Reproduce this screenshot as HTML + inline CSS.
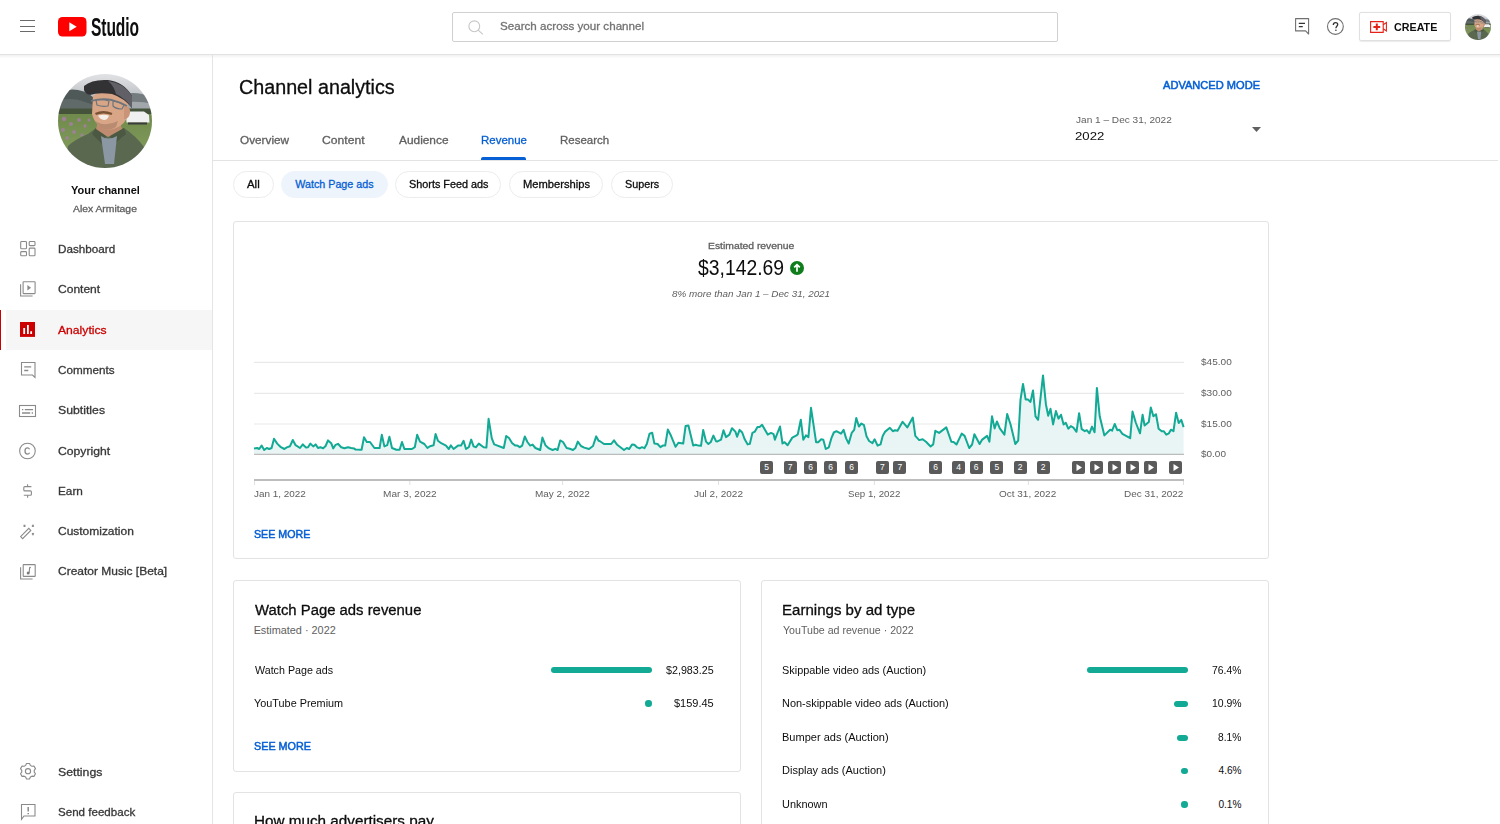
<!DOCTYPE html>
<html><head><meta charset="utf-8">
<style>
*{box-sizing:border-box;margin:0;padding:0}
html,body{width:1500px;height:824px;overflow:hidden;background:#fff;font-family:"Liberation Sans",sans-serif;color:#0d0d0d}
.t{position:absolute;line-height:1;white-space:nowrap;transform-origin:0 0}
.abs{position:absolute}
svg{position:absolute;overflow:visible}
.chip{position:absolute;top:171px;height:26.5px;border:1px solid #ececec;border-radius:13.5px;background:#fff}
.card{position:absolute;border:1px solid #e3e3e3;border-radius:3px;background:#fff}
.bx{position:absolute;top:461px;width:13px;height:13px;background:#5a5a5a;border-radius:2px;color:#fff;font-size:8.5px;line-height:13px;text-align:center;font-family:"Liberation Sans",sans-serif}
.bar{position:absolute;height:6.6px;border-radius:3.3px;background:#12a995}
.dot{position:absolute;width:6.6px;height:6.6px;border-radius:50%;background:#12a995}
</style></head><body>

<!-- HEADER -->
<div class="abs" style="left:0;top:0;width:1500px;height:55px;background:#fff;border-bottom:1px solid #e2e2e2"></div>
<div class="abs" style="left:0;top:55px;width:1500px;height:3px;background:linear-gradient(#f1f1f1,#fdfdfd)"></div>
<div class="abs" style="left:20px;top:20.3px;width:15.3px;height:1.2px;background:#6a6a6a"></div>
<div class="abs" style="left:20px;top:25.8px;width:15.3px;height:1.2px;background:#6a6a6a"></div>
<div class="abs" style="left:20px;top:30.8px;width:15.3px;height:1.2px;background:#6a6a6a"></div>
<svg style="left:58px;top:17px" width="28" height="20" viewBox="0 0 28 20"><rect x="0" y="0" width="28.5" height="19.5" rx="4.5" fill="#ff0000"/><path d="M11.3 5.3 L18.7 9.75 L11.3 14.2 Z" fill="#fff"/></svg>
<div class="t" style="left:91.3px;top:14.6px;font-size:25.5px;font-weight:bold;letter-spacing:-0.1px;transform:scaleX(0.61)">Studio</div>
<div class="abs" style="left:452px;top:12px;width:605.5px;height:29.5px;border:1px solid #d0d0d0;border-radius:2px"></div>
<svg style="left:467.5px;top:19.5px" width="16" height="15" viewBox="0 0 16 15"><circle cx="6.3" cy="6.3" r="5.4" fill="none" stroke="#c6c6c6" stroke-width="1.1"/><path d="M10.2 10.2 L14.8 14.3" stroke="#c6c6c6" stroke-width="1.1"/></svg>
<svg style="left:1295px;top:18px" width="15" height="17" viewBox="0 0 15 17"><path d="M0.6 0.6 H13.6 V16 L10.6 12.9 H0.6 Z" fill="none" stroke="#707070" stroke-width="1.1" stroke-linejoin="round"/><path d="M3.8 5.4 H10 M3.8 8.7 H7.8" stroke="#333" stroke-width="1.3"/></svg>
<svg style="left:1327px;top:18px" width="17" height="17" viewBox="0 0 17 17"><circle cx="8.4" cy="8.5" r="7.9" fill="none" stroke="#707070" stroke-width="1.1"/><path d="M6.3 6.9 C6.3 5.4 7.2 4.6 8.6 4.6 C9.9 4.6 10.7 5.5 10.7 6.6 C10.7 8.2 8.9 8.4 8.9 10.2" fill="none" stroke="#333" stroke-width="1.3"/><circle cx="8.9" cy="12.3" r="0.8" fill="#333"/></svg>
<div class="abs" style="left:1359.3px;top:12.2px;width:91.6px;height:29px;border:1px solid #e0e0e0;border-radius:2px;box-shadow:0 0.5px 1px rgba(0,0,0,0.08)"></div>
<svg style="left:1370px;top:21px" width="18" height="12" viewBox="0 0 18 12"><path d="M0.6 0.6 H13.2 V11.4 H0.6 Z" fill="none" stroke="#e62117" stroke-width="1.1"/><path d="M13.2 3.8 L16.4 1.6 V10 L13.2 7.8" fill="none" stroke="#e62117" stroke-width="1.1"/><path d="M6.8 2.5 V9.3 M3.4 5.9 H10.2" stroke="#e62117" stroke-width="2"/></svg>
<svg style="left:1465px;top:14px" width="26" height="26" viewBox="0 0 94 94">
<defs><clipPath id="clipb"><circle cx="47" cy="47" r="47"/></clipPath>
<filter id="blb" x="-5%" y="-5%" width="110%" height="110%"><feGaussianBlur stdDeviation="0.7"/></filter>
<linearGradient id="skyb" x1="0" y1="0" x2="0" y2="1"><stop offset="0" stop-color="#e4e5e7"/><stop offset="0.22" stop-color="#c4c7cb"/><stop offset="0.4" stop-color="#8f969b"/></linearGradient>
<linearGradient id="fldb" x1="0" y1="0" x2="0" y2="1"><stop offset="0" stop-color="#6f8a4c"/><stop offset="1" stop-color="#8aa262"/></linearGradient></defs>
<g clip-path="url(#clipb)"><g filter="url(#blb)">
<rect x="-2" y="-2" width="98" height="98" fill="url(#skyb)"/>
<path d="M0 19 Q10 14 20 16 Q30 18 36 24 L38 38 L0 38 Z" fill="#4f5a58"/>
<path d="M0 27 Q12 23 24 27 L36 31 L36 38 L0 38 Z" fill="#606b68"/>
<path d="M60 22 Q72 17 84 20 Q92 22 96 26 L96 38 L60 38 Z" fill="#747b80"/>
<path d="M62 29 Q78 26 96 30 L96 38 L62 38 Z" fill="#a2a7ab"/>
<rect x="-2" y="34.5" width="98" height="6.5" fill="#44533a"/>
<rect x="-2" y="40" width="98" height="56" fill="url(#fldb)"/>
<g fill="#a77da8" opacity="0.8"><circle cx="6" cy="45" r="2.3"/><circle cx="13" cy="50" r="2"/><circle cx="21" cy="46" r="1.9"/><circle cx="5" cy="56" r="2.1"/><circle cx="16" cy="58" r="1.9"/><circle cx="27" cy="52" r="1.7"/><circle cx="9" cy="64" r="1.8"/><circle cx="24" cy="61" r="1.6"/><circle cx="31" cy="46" r="1.5"/></g>
<path d="M68 40 L72 37.5 H86 L91 41 L91.5 48.5 H68.5 Z" fill="#f0f0f0"/>
<path d="M70 48.5 H89 V50.5 H70 Z" fill="#3a3a3a"/>
<path d="M6 96 L10 72 Q16 66 30 60 L38 54 L48 62 L66 54 Q78 62 86 73 L90 96 Z" fill="#5a684f"/>
<path d="M38 54 L48 62 L44 70 L34 60 Z" fill="#4b5843"/>
<path d="M66 54 L52 62 L56 70 L68 60 Z" fill="#4b5843"/>
<path d="M40 48 L62 48 L64 55 L50 63 L38 55 Z" fill="#c08c70"/>
<path d="M43 62 Q50 67 59 62 L56 90 L47 90 Z" fill="#8b97a3"/>
<path d="M35 22 Q42 15 54 16 Q66 18 70 28 L70 40 Q68 50 58 54 Q50 57 44 54 Q36 49 34 40 Z" fill="#d8a687"/>
<path d="M66 32 Q73 32 72 39 Q71 45 66 45 Z" fill="#c99478"/>
<path d="M36 46 Q46 54 60 47 L58 53 Q50 58 43 54 Z" fill="#b98b71"/>
<path d="M40 41.5 Q46 40 51 41.5 Q49.5 46 46 46 Q42 45.5 40 41.5 Z" fill="#f4efe8"/>
<path d="M37.5 40 Q45 36.5 54 40" stroke="#7a5234" stroke-width="2.4" fill="none"/>
<path d="M33 27 Q44 24 54 26 Q62 28 69 32" stroke="#6d747c" stroke-width="1.8" fill="none"/>
<path d="M38 26 Q45 25 51 27 L50 32 Q44 33 39 31 Z" fill="none" stroke="#6d747c" stroke-width="1.2"/>
<path d="M55 27 Q61 28 66 31 L64 35 Q58 35 55 32 Z" fill="none" stroke="#6d747c" stroke-width="1.2"/>
<path d="M26 12 Q34 5 50 6 Q66 8 74 22 L74 34 Q66 24 54 20 Q40 18 32 21 Q25 20 26 12 Z" fill="#323236"/>
<path d="M50 7 Q66 9 74 22 L74 34 Q67 24 58 20 Q56 12 50 7 Z" fill="#606066"/>
</g></g></svg>

<!-- SIDEBAR -->
<div class="abs" style="left:212px;top:55px;width:1px;height:769px;background:#e4e4e4"></div>
<svg style="left:58.3px;top:74px" width="94" height="94" viewBox="0 0 94 94">
<defs><clipPath id="clipa"><circle cx="47" cy="47" r="47"/></clipPath>
<filter id="bla" x="-5%" y="-5%" width="110%" height="110%"><feGaussianBlur stdDeviation="0.7"/></filter>
<linearGradient id="skya" x1="0" y1="0" x2="0" y2="1"><stop offset="0" stop-color="#e4e5e7"/><stop offset="0.22" stop-color="#c4c7cb"/><stop offset="0.4" stop-color="#8f969b"/></linearGradient>
<linearGradient id="flda" x1="0" y1="0" x2="0" y2="1"><stop offset="0" stop-color="#6f8a4c"/><stop offset="1" stop-color="#8aa262"/></linearGradient></defs>
<g clip-path="url(#clipa)"><g filter="url(#bla)">
<rect x="-2" y="-2" width="98" height="98" fill="url(#skya)"/>
<path d="M0 19 Q10 14 20 16 Q30 18 36 24 L38 38 L0 38 Z" fill="#4f5a58"/>
<path d="M0 27 Q12 23 24 27 L36 31 L36 38 L0 38 Z" fill="#606b68"/>
<path d="M60 22 Q72 17 84 20 Q92 22 96 26 L96 38 L60 38 Z" fill="#747b80"/>
<path d="M62 29 Q78 26 96 30 L96 38 L62 38 Z" fill="#a2a7ab"/>
<rect x="-2" y="34.5" width="98" height="6.5" fill="#44533a"/>
<rect x="-2" y="40" width="98" height="56" fill="url(#flda)"/>
<g fill="#a77da8" opacity="0.8"><circle cx="6" cy="45" r="2.3"/><circle cx="13" cy="50" r="2"/><circle cx="21" cy="46" r="1.9"/><circle cx="5" cy="56" r="2.1"/><circle cx="16" cy="58" r="1.9"/><circle cx="27" cy="52" r="1.7"/><circle cx="9" cy="64" r="1.8"/><circle cx="24" cy="61" r="1.6"/><circle cx="31" cy="46" r="1.5"/></g>
<path d="M68 40 L72 37.5 H86 L91 41 L91.5 48.5 H68.5 Z" fill="#f0f0f0"/>
<path d="M70 48.5 H89 V50.5 H70 Z" fill="#3a3a3a"/>
<path d="M6 96 L10 72 Q16 66 30 60 L38 54 L48 62 L66 54 Q78 62 86 73 L90 96 Z" fill="#5a684f"/>
<path d="M38 54 L48 62 L44 70 L34 60 Z" fill="#4b5843"/>
<path d="M66 54 L52 62 L56 70 L68 60 Z" fill="#4b5843"/>
<path d="M40 48 L62 48 L64 55 L50 63 L38 55 Z" fill="#c08c70"/>
<path d="M43 62 Q50 67 59 62 L56 90 L47 90 Z" fill="#8b97a3"/>
<path d="M35 22 Q42 15 54 16 Q66 18 70 28 L70 40 Q68 50 58 54 Q50 57 44 54 Q36 49 34 40 Z" fill="#d8a687"/>
<path d="M66 32 Q73 32 72 39 Q71 45 66 45 Z" fill="#c99478"/>
<path d="M36 46 Q46 54 60 47 L58 53 Q50 58 43 54 Z" fill="#b98b71"/>
<path d="M40 41.5 Q46 40 51 41.5 Q49.5 46 46 46 Q42 45.5 40 41.5 Z" fill="#f4efe8"/>
<path d="M37.5 40 Q45 36.5 54 40" stroke="#7a5234" stroke-width="2.4" fill="none"/>
<path d="M33 27 Q44 24 54 26 Q62 28 69 32" stroke="#6d747c" stroke-width="1.8" fill="none"/>
<path d="M38 26 Q45 25 51 27 L50 32 Q44 33 39 31 Z" fill="none" stroke="#6d747c" stroke-width="1.2"/>
<path d="M55 27 Q61 28 66 31 L64 35 Q58 35 55 32 Z" fill="none" stroke="#6d747c" stroke-width="1.2"/>
<path d="M26 12 Q34 5 50 6 Q66 8 74 22 L74 34 Q66 24 54 20 Q40 18 32 21 Q25 20 26 12 Z" fill="#323236"/>
<path d="M50 7 Q66 9 74 22 L74 34 Q67 24 58 20 Q56 12 50 7 Z" fill="#606066"/>
</g></g></svg>
<div class="abs" style="left:6px;top:309.5px;width:206px;height:40.5px;background:#f6f6f6"></div>
<div class="abs" style="left:0;top:309.5px;width:1.2px;height:40.5px;background:#cc0000"></div>
<svg style="left:20px;top:241.4px" width="16" height="16" viewBox="0 0 16 16" fill="none" stroke="#8a8a8a" stroke-width="1.1"><rect x="0.7" y="0.5" width="5.8" height="7.3" rx="0.9"/><rect x="9.2" y="0.5" width="5.8" height="4.1" rx="0.9"/><rect x="0.7" y="10.6" width="5.8" height="4.2" rx="0.9"/><rect x="9.2" y="7.1" width="5.8" height="7.7" rx="0.9"/></svg>
<svg style="left:20px;top:281.3px" width="16" height="16" viewBox="0 0 16 16" fill="none" stroke="#8a8a8a" stroke-width="1.1"><rect x="3.1" y="0.8" width="12" height="11.8" rx="0.5"/><path d="M0.6 3.2 V15 H12.6"/><path d="M7.4 4 L11 6.7 L7.4 9.4 Z" fill="#8a8a8a" stroke="none"/></svg>
<svg style="left:20px;top:322px" width="15" height="15" viewBox="0 0 15 15"><rect x="0" y="0" width="15" height="14.9" fill="#cc0000"/><path d="M4.2 6 V12 M7.9 3.1 V12 M11.15 9.3 V12" stroke="#fff" stroke-width="1.8"/></svg>
<svg style="left:20.6px;top:361.5px" width="16" height="16" viewBox="0 0 16 16" fill="none" stroke="#8a8a8a" stroke-width="1.1"><path d="M0.5 0.5 H14 V15.5 L11.5 13 H0.5 Z"/><path d="M3.2 4.9 H10.2 M3.2 8.5 H7.3" stroke-width="1.3"/></svg>
<svg style="left:19.2px;top:405.3px" width="17" height="12" viewBox="0 0 17 12" fill="none" stroke="#8a8a8a" stroke-width="1.1"><rect x="0.5" y="0.5" width="16" height="11"/><path d="M3 4.6 H4.3 M5.8 4.6 H14 M3 8 H11.2 M12.7 8 H14" stroke-width="1.3"/></svg>
<svg style="left:19.2px;top:443px" width="17" height="17" viewBox="0 0 17 17"><circle cx="8.45" cy="8" r="7.8" fill="none" stroke="#8a8a8a" stroke-width="1.1"/><path d="M10.6 6.2 Q9.9 4.9 8.5 4.9 Q6 4.9 6 8 Q6 11.1 8.5 11.1 Q9.9 11.1 10.6 9.8" fill="none" stroke="#8a8a8a" stroke-width="1.3"/></svg>
<svg style="left:23.3px;top:483.4px" width="10" height="16" viewBox="0 0 10 16" fill="none" stroke="#8a8a8a" stroke-width="1.1"><path d="M8.4 3.6 H1.8 Q0.8 3.6 0.8 4.6 V6.9 Q0.8 7.9 1.8 7.9 H7.4 Q8.4 7.9 8.4 8.9 V11.3 Q8.4 12.3 7.4 12.3 H0.8"/><path d="M4.6 1.2 V3.6 M4.6 12.3 V14.8"/></svg>
<svg style="left:20.4px;top:524px" width="15" height="15" viewBox="0 0 15 15" fill="none" stroke="#8a8a8a" stroke-width="1.1"><path d="M0.6 12.6 L8.8 4.4 L10.8 6.4 L2.6 14.6 Z"/><path d="M3.6 0.8 L5.4 2.6 M5.4 0.8 L3.6 2.6 M12 0.8 L13.8 2.6 M13.8 0.8 L12 2.6 M12 9.2 L13.8 11 M13.8 9.2 L12 11" stroke-width="1.1"/></svg>
<svg style="left:20px;top:564px" width="16" height="16" viewBox="0 0 16 16" fill="none" stroke="#8a8a8a" stroke-width="1.1"><rect x="3.2" y="0.6" width="12" height="11.8" rx="0.5"/><path d="M0.6 3.2 V15 H12.6"/><path d="M9.6 3.3 L9.2 8.8 M9.6 3.3 L10.8 3.6" stroke-width="1.1"/><circle cx="8.2" cy="9" r="1.5" fill="#7a7a7a" stroke="none"/></svg>
<svg style="left:19.7px;top:763.3px" width="17" height="17" viewBox="0 0 17 17"><polygon points="6.49,0.45 9.51,0.45 10.36,2.36 11.88,3.24 13.96,3.02 15.47,5.63 14.24,7.32 14.24,9.08 15.47,10.77 13.96,13.38 11.88,13.16 10.36,14.04 9.51,15.95 6.49,15.95 5.64,14.04 4.12,13.16 2.04,13.38 0.53,10.77 1.76,9.08 1.76,7.32 0.53,5.63 2.04,3.02 4.12,3.24 5.64,2.36" fill="none" stroke="#8a8a8a" stroke-width="1.1" stroke-linejoin="round"/><circle cx="8.0" cy="8.2" r="2.6" fill="none" stroke="#8a8a8a" stroke-width="1.1"/></svg>
<svg style="left:20.7px;top:804px" width="15" height="16" viewBox="0 0 15 16" fill="none" stroke="#8a8a8a" stroke-width="1.1"><path d="M0.5 0.5 H14 V12 H3 L0.5 15.3 Z"/><path d="M7.2 3 V7.5 M7.2 9 V10.3" stroke-width="1.5"/></svg>

<!-- MAIN -->
<div class="abs" style="left:213px;top:160px;width:1285px;height:1px;background:#e3e3e3"></div>
<div class="abs" style="left:481px;top:157px;width:45px;height:3px;background:#065fd4;border-radius:2px 2px 0 0"></div>
<svg style="left:1252px;top:127px" width="9" height="5" viewBox="0 0 9 5"><path d="M0 0 H9 L4.5 5 Z" fill="#606060"/></svg>
<div class="chip" style="left:233.3px;width:41px"></div>
<div class="chip" style="left:281.3px;width:106.4px;border-color:#eef4fc;background:#eef4fc"></div>
<div class="chip" style="left:395.2px;width:106.3px"></div>
<div class="chip" style="left:509.3px;width:94.1px"></div>
<div class="chip" style="left:610.6px;width:62.1px"></div>

<div class="card" style="left:233px;top:221px;width:1036px;height:338px"></div>
<div class="card" style="left:233px;top:580px;width:508px;height:192px"></div>
<div class="card" style="left:761px;top:580px;width:508px;height:260px"></div>
<div class="card" style="left:233px;top:792px;width:508px;height:100px"></div>

<svg style="left:790.2px;top:261px" width="14" height="14" viewBox="0 0 14 14"><circle cx="7" cy="7" r="7" fill="#0f7d1c"/><path d="M7 10.8 V3.6 M4.2 6.4 L7 3.6 L9.8 6.4" fill="none" stroke="#fff" stroke-width="1.7"/></svg>

<!-- chart -->
<svg style="left:0;top:0" width="1500" height="824" viewBox="0 0 1500 824">
<g stroke="#e9e9e9" stroke-width="1.2"><path d="M254 362.4 H1184 M254 393.3 H1184 M254 424 H1184"/></g>
<polygon points="254,454 254.0,448.4 257.2,448.0 259.2,449.0 261.6,445.6 264.2,450.0 266.8,448.0 269.2,449.0 271.6,448.0 274.0,438.8 277.2,443.6 280.4,446.8 284.4,449.0 286.8,447.4 290.0,446.2 292.8,440.0 295.6,445.2 300.0,448.0 302.8,444.4 306.0,447.4 308.0,447.2 310.4,443.6 313.2,446.4 315.6,444.4 318.0,448.0 320.4,447.2 323.2,448.2 325.6,446.0 328.0,440.4 331.2,443.2 333.2,448.4 335.6,444.8 338.0,443.8 341.2,447.2 344.4,448.2 348.0,447.2 351.2,448.0 354.0,448.4 355.6,449.6 361.6,449.8 364.0,437.2 366.8,442.0 370.0,442.0 374.4,448.0 379.6,448.0 381.8,434.8 384.4,446.4 387.2,445.2 389.4,436.8 392.0,448.0 396.4,449.8 399.6,449.8 402.0,442.0 404.4,449.0 412.0,449.0 414.8,447.2 417.2,434.8 420.0,441.6 424.4,444.0 427.4,448.0 430.0,446.2 433.6,445.2 435.6,434.0 438.0,440.8 441.2,443.2 446.0,445.6 448.8,449.0 450.8,445.4 453.6,449.0 458.0,445.6 461.2,445.4 463.6,440.8 466.0,449.0 468.8,447.2 471.2,439.6 473.6,446.4 476.0,447.2 478.8,443.6 483.6,447.2 486.4,447.6 488.6,418.8 491.8,438.4 494.2,444.4 503.8,448.0 506.2,436.0 509.0,438.0 512.2,443.2 515.4,445.6 517.4,445.6 519.8,447.2 522.2,445.6 524.8,436.4 527.4,442.0 530.2,445.6 532.6,444.6 535.4,448.0 540.2,450.0 542.4,437.6 545.4,445.2 549.0,448.4 552.6,450.0 555.4,448.8 557.6,450.0 560.2,440.4 563.0,442.0 566.6,448.0 569.8,448.8 573.0,450.0 575.4,448.0 577.8,441.6 581.0,446.0 584.2,447.6 589.0,449.0 593.0,446.0 596.2,436.4 598.6,440.8 600.0,441.2 604.0,444.0 611.2,444.0 614.0,440.4 617.2,444.8 624.0,450.0 626.8,448.0 629.2,449.0 632.0,444.4 634.4,444.8 637.2,447.4 639.6,448.4 642.0,447.2 644.4,448.2 646.8,444.0 649.6,433.6 652.2,432.8 654.4,443.6 657.6,444.0 660.4,447.2 662.8,445.6 665.2,445.6 667.8,429.6 670.4,434.4 675.6,446.8 678.4,442.8 683.2,443.6 685.6,426.0 688.4,425.4 693.2,445.6 695.6,444.8 698.4,445.6 701.0,445.8 703.2,430.0 706.0,441.6 708.4,444.0 710.8,442.0 713.4,435.6 716.0,441.2 717.5,441.4 721.0,439.7 723.5,430.3 726.0,437.1 729.4,434.6 732.0,428.2 735.4,431.6 737.1,436.7 739.6,429.9 742.2,432.5 744.7,439.3 747.7,444.4 749.8,443.9 752.4,432.9 754.9,431.6 757.5,426.9 759.6,426.9 762.1,424.8 767.7,434.6 771.0,432.9 773.6,434.2 774.9,439.7 780.0,426.5 782.5,443.5 784.6,442.2 787.6,445.2 792.3,437.6 796.5,435.4 797.8,434.2 800.8,419.7 803.3,439.7 805.9,435.4 808.4,437.1 811.0,407.8 816.1,442.2 818.2,442.2 821.2,439.3 823.3,439.7 825.8,449.0 828.8,447.3 831.3,438.4 833.8,432.5 836.4,431.2 841.0,433.7 843.6,429.9 846.1,438.4 848.7,443.5 851.7,432.9 854.2,429.9 856.3,418.0 858.9,426.5 861.4,423.5 864.0,425.2 866.5,436.3 869.1,441.0 872.5,443.1 874.6,439.3 877.6,445.6 880.5,444.4 882.7,435.9 885.2,431.6 889.9,427.8 892.8,431.2 895.0,430.3 897.5,430.8 902.6,421.8 907.3,427.4 912.8,417.6 915.3,435.9 919.2,440.1 922.6,439.3 926.0,441.8 930.6,446.5 933.2,444.4 935.3,430.8 939.1,432.9 946.3,427.4 951.3,441.7 953.6,442.0 956.5,444.5 961.7,433.6 964.6,435.9 969.2,448.0 972.1,444.5 974.4,434.2 979.6,444.0 981.9,439.9 987.1,435.9 989.4,441.7 992.0,416.3 994.6,428.4 996.9,421.5 999.8,428.4 1004.4,434.7 1007.2,414.0 1010.7,425.0 1015.3,444.0 1018.2,440.5 1020.5,399.6 1023.0,384.0 1025.7,399.6 1028.0,399.6 1030.5,401.9 1033.0,390.4 1035.5,416.3 1038.1,419.8 1043.0,375.4 1045.9,404.2 1048.2,415.7 1050.5,408.8 1053.1,424.4 1055.9,411.1 1058.5,418.6 1061.0,414.7 1063.6,424.5 1065.7,422.7 1068.3,428.7 1070.8,426.1 1073.4,427.6 1076.5,431.8 1079.1,413.2 1081.7,429.2 1084.8,431.2 1086.8,430.2 1089.4,433.3 1092.0,426.6 1094.6,432.3 1096.9,387.9 1099.7,416.3 1104.4,435.4 1110.1,429.7 1112.1,430.7 1114.7,424.0 1117.3,430.2 1119.3,429.7 1122.4,433.8 1130.2,438.2 1132.5,411.6 1135.9,423.0 1140.0,433.3 1142.6,414.7 1144.6,425.6 1148.8,422.0 1150.8,407.5 1153.4,416.3 1156.0,414.2 1158.6,428.7 1161.7,431.2 1163.7,431.2 1166.3,434.6 1168.9,433.3 1170.9,429.7 1173.5,431.2 1176.1,412.7 1178.7,423.0 1181.3,419.9 1183.6,427.1 1183.6,454" fill="#e9f5f4"/>
<path d="M254 454.3 H1184" stroke="#bcbcbc" stroke-width="1.2"/>
<polyline points="254.0,448.4 257.2,448.0 259.2,449.0 261.6,445.6 264.2,450.0 266.8,448.0 269.2,449.0 271.6,448.0 274.0,438.8 277.2,443.6 280.4,446.8 284.4,449.0 286.8,447.4 290.0,446.2 292.8,440.0 295.6,445.2 300.0,448.0 302.8,444.4 306.0,447.4 308.0,447.2 310.4,443.6 313.2,446.4 315.6,444.4 318.0,448.0 320.4,447.2 323.2,448.2 325.6,446.0 328.0,440.4 331.2,443.2 333.2,448.4 335.6,444.8 338.0,443.8 341.2,447.2 344.4,448.2 348.0,447.2 351.2,448.0 354.0,448.4 355.6,449.6 361.6,449.8 364.0,437.2 366.8,442.0 370.0,442.0 374.4,448.0 379.6,448.0 381.8,434.8 384.4,446.4 387.2,445.2 389.4,436.8 392.0,448.0 396.4,449.8 399.6,449.8 402.0,442.0 404.4,449.0 412.0,449.0 414.8,447.2 417.2,434.8 420.0,441.6 424.4,444.0 427.4,448.0 430.0,446.2 433.6,445.2 435.6,434.0 438.0,440.8 441.2,443.2 446.0,445.6 448.8,449.0 450.8,445.4 453.6,449.0 458.0,445.6 461.2,445.4 463.6,440.8 466.0,449.0 468.8,447.2 471.2,439.6 473.6,446.4 476.0,447.2 478.8,443.6 483.6,447.2 486.4,447.6 488.6,418.8 491.8,438.4 494.2,444.4 503.8,448.0 506.2,436.0 509.0,438.0 512.2,443.2 515.4,445.6 517.4,445.6 519.8,447.2 522.2,445.6 524.8,436.4 527.4,442.0 530.2,445.6 532.6,444.6 535.4,448.0 540.2,450.0 542.4,437.6 545.4,445.2 549.0,448.4 552.6,450.0 555.4,448.8 557.6,450.0 560.2,440.4 563.0,442.0 566.6,448.0 569.8,448.8 573.0,450.0 575.4,448.0 577.8,441.6 581.0,446.0 584.2,447.6 589.0,449.0 593.0,446.0 596.2,436.4 598.6,440.8 600.0,441.2 604.0,444.0 611.2,444.0 614.0,440.4 617.2,444.8 624.0,450.0 626.8,448.0 629.2,449.0 632.0,444.4 634.4,444.8 637.2,447.4 639.6,448.4 642.0,447.2 644.4,448.2 646.8,444.0 649.6,433.6 652.2,432.8 654.4,443.6 657.6,444.0 660.4,447.2 662.8,445.6 665.2,445.6 667.8,429.6 670.4,434.4 675.6,446.8 678.4,442.8 683.2,443.6 685.6,426.0 688.4,425.4 693.2,445.6 695.6,444.8 698.4,445.6 701.0,445.8 703.2,430.0 706.0,441.6 708.4,444.0 710.8,442.0 713.4,435.6 716.0,441.2 717.5,441.4 721.0,439.7 723.5,430.3 726.0,437.1 729.4,434.6 732.0,428.2 735.4,431.6 737.1,436.7 739.6,429.9 742.2,432.5 744.7,439.3 747.7,444.4 749.8,443.9 752.4,432.9 754.9,431.6 757.5,426.9 759.6,426.9 762.1,424.8 767.7,434.6 771.0,432.9 773.6,434.2 774.9,439.7 780.0,426.5 782.5,443.5 784.6,442.2 787.6,445.2 792.3,437.6 796.5,435.4 797.8,434.2 800.8,419.7 803.3,439.7 805.9,435.4 808.4,437.1 811.0,407.8 816.1,442.2 818.2,442.2 821.2,439.3 823.3,439.7 825.8,449.0 828.8,447.3 831.3,438.4 833.8,432.5 836.4,431.2 841.0,433.7 843.6,429.9 846.1,438.4 848.7,443.5 851.7,432.9 854.2,429.9 856.3,418.0 858.9,426.5 861.4,423.5 864.0,425.2 866.5,436.3 869.1,441.0 872.5,443.1 874.6,439.3 877.6,445.6 880.5,444.4 882.7,435.9 885.2,431.6 889.9,427.8 892.8,431.2 895.0,430.3 897.5,430.8 902.6,421.8 907.3,427.4 912.8,417.6 915.3,435.9 919.2,440.1 922.6,439.3 926.0,441.8 930.6,446.5 933.2,444.4 935.3,430.8 939.1,432.9 946.3,427.4 951.3,441.7 953.6,442.0 956.5,444.5 961.7,433.6 964.6,435.9 969.2,448.0 972.1,444.5 974.4,434.2 979.6,444.0 981.9,439.9 987.1,435.9 989.4,441.7 992.0,416.3 994.6,428.4 996.9,421.5 999.8,428.4 1004.4,434.7 1007.2,414.0 1010.7,425.0 1015.3,444.0 1018.2,440.5 1020.5,399.6 1023.0,384.0 1025.7,399.6 1028.0,399.6 1030.5,401.9 1033.0,390.4 1035.5,416.3 1038.1,419.8 1043.0,375.4 1045.9,404.2 1048.2,415.7 1050.5,408.8 1053.1,424.4 1055.9,411.1 1058.5,418.6 1061.0,414.7 1063.6,424.5 1065.7,422.7 1068.3,428.7 1070.8,426.1 1073.4,427.6 1076.5,431.8 1079.1,413.2 1081.7,429.2 1084.8,431.2 1086.8,430.2 1089.4,433.3 1092.0,426.6 1094.6,432.3 1096.9,387.9 1099.7,416.3 1104.4,435.4 1110.1,429.7 1112.1,430.7 1114.7,424.0 1117.3,430.2 1119.3,429.7 1122.4,433.8 1130.2,438.2 1132.5,411.6 1135.9,423.0 1140.0,433.3 1142.6,414.7 1144.6,425.6 1148.8,422.0 1150.8,407.5 1153.4,416.3 1156.0,414.2 1158.6,428.7 1161.7,431.2 1163.7,431.2 1166.3,434.6 1168.9,433.3 1170.9,429.7 1173.5,431.2 1176.1,412.7 1178.7,423.0 1181.3,419.9 1183.6,427.1" fill="none" stroke="#12a995" stroke-width="2" stroke-linejoin="round"/>
<path d="M254 480 H1184" stroke="#bdbdbd" stroke-width="2"/>
<g stroke="#e0e0e0" stroke-width="1"><path d="M254.5 481 V485 M409.8 481 V485 M562.6 481 V485 M718.5 481 V485 M874.4 481 V485 M1028.4 481 V485 M1183.5 481 V485"/></g>
</svg>
<div class="bx" style="left:760.2px">5</div>
<div class="bx" style="left:783.5px">7</div>
<div class="bx" style="left:804px">6</div>
<div class="bx" style="left:824.2px">6</div>
<div class="bx" style="left:845px">6</div>
<div class="bx" style="left:875.9px">7</div>
<div class="bx" style="left:893.4px">7</div>
<div class="bx" style="left:929.2px">6</div>
<div class="bx" style="left:952px">4</div>
<div class="bx" style="left:969.7px">6</div>
<div class="bx" style="left:990.4px">5</div>
<div class="bx" style="left:1013.5px">2</div>
<div class="bx" style="left:1036.5px">2</div>
<svg style="left:1072.2px;top:461px" width="13" height="13" viewBox="0 0 13 13"><rect width="13" height="13" rx="2" fill="#5a5a5a"/><path d="M4.5 3 L10 6.5 L4.5 10 Z" fill="#fff"/></svg>
<svg style="left:1090px;top:461px" width="13" height="13" viewBox="0 0 13 13"><rect width="13" height="13" rx="2" fill="#5a5a5a"/><path d="M4.5 3 L10 6.5 L4.5 10 Z" fill="#fff"/></svg>
<svg style="left:1108px;top:461px" width="13" height="13" viewBox="0 0 13 13"><rect width="13" height="13" rx="2" fill="#5a5a5a"/><path d="M4.5 3 L10 6.5 L4.5 10 Z" fill="#fff"/></svg>
<svg style="left:1125.8px;top:461px" width="13" height="13" viewBox="0 0 13 13"><rect width="13" height="13" rx="2" fill="#5a5a5a"/><path d="M4.5 3 L10 6.5 L4.5 10 Z" fill="#fff"/></svg>
<svg style="left:1143.9px;top:461px" width="13" height="13" viewBox="0 0 13 13"><rect width="13" height="13" rx="2" fill="#5a5a5a"/><path d="M4.5 3 L10 6.5 L4.5 10 Z" fill="#fff"/></svg>
<svg style="left:1169px;top:461px" width="13" height="13" viewBox="0 0 13 13"><rect width="13" height="13" rx="2" fill="#5a5a5a"/><path d="M4.5 3 L10 6.5 L4.5 10 Z" fill="#fff"/></svg>

<div class="bar" style="left:550.9px;top:666.7px;width:101.1px"></div>
<div class="dot" style="left:645.3px;top:700.3px"></div>
<div class="bar" style="left:1087px;top:666.9px;width:101px"></div>
<div class="bar" style="left:1173.6px;top:700.5px;width:14.4px"></div>
<div class="bar" style="left:1177px;top:734.6px;width:11px"></div>
<div class="dot" style="left:1181px;top:767.6px"></div>
<div class="dot" style="left:1181px;top:801.4px"></div>

<div class="t" style="left:499.53px;top:21.43px;font-size:11.30px;color:#737373;-webkit-text-stroke:0.3px #737373;transform:scaleX(1.0290)">Search across your channel</div>
<div class="t" style="left:1393.57px;top:21.36px;font-size:11.74px;color:#0d0d0d;font-weight:bold;transform:scaleX(0.9142)">CREATE</div>
<div class="t" style="left:70.89px;top:183.76px;font-size:11.74px;color:#0d0d0d;font-weight:bold;transform:scaleX(0.9369)">Your channel</div>
<div class="t" style="left:72.70px;top:204.20px;font-size:9.57px;color:#606060;-webkit-text-stroke:0.3px #606060;transform:scaleX(1.0829)">Alex Armitage</div>
<div class="t" style="left:57.66px;top:243.93px;font-size:11.30px;color:#383838;-webkit-text-stroke:0.3px #383838;transform:scaleX(1.0342)">Dashboard</div>
<div class="t" style="left:58.00px;top:284.23px;font-size:11.30px;color:#383838;-webkit-text-stroke:0.3px #383838;transform:scaleX(1.0652)">Content</div>
<div class="t" style="left:58.40px;top:324.73px;font-size:11.30px;color:#cc0000;-webkit-text-stroke:0.3px #cc0000;transform:scaleX(1.0758)">Analytics</div>
<div class="t" style="left:57.82px;top:365.03px;font-size:11.30px;color:#383838;-webkit-text-stroke:0.3px #383838;transform:scaleX(1.0345)">Comments</div>
<div class="t" style="left:57.91px;top:405.23px;font-size:11.30px;color:#383838;-webkit-text-stroke:0.3px #383838;transform:scaleX(1.0854)">Subtitles</div>
<div class="t" style="left:57.79px;top:445.53px;font-size:11.30px;color:#383838;-webkit-text-stroke:0.3px #383838;transform:scaleX(1.0786)">Copyright</div>
<div class="t" style="left:57.76px;top:486.23px;font-size:11.30px;color:#383838;-webkit-text-stroke:0.3px #383838;transform:scaleX(1.0430)">Earn</div>
<div class="t" style="left:58.10px;top:526.23px;font-size:11.30px;color:#383838;-webkit-text-stroke:0.3px #383838;transform:scaleX(1.0593)">Customization</div>
<div class="t" style="left:58.10px;top:566.33px;font-size:11.30px;color:#383838;-webkit-text-stroke:0.3px #383838;transform:scaleX(1.0600)">Creator Music [Beta]</div>
<div class="t" style="left:57.91px;top:766.73px;font-size:11.30px;color:#383838;-webkit-text-stroke:0.3px #383838;transform:scaleX(1.0885)">Settings</div>
<div class="t" style="left:57.94px;top:807.03px;font-size:11.30px;color:#383838;-webkit-text-stroke:0.3px #383838;transform:scaleX(1.0242)">Send feedback</div>
<div class="t" style="left:239.41px;top:77.17px;font-size:20.00px;color:#0d0d0d;-webkit-text-stroke:0.3px #0d0d0d;transform:scaleX(0.9861)">Channel analytics</div>
<div class="t" style="left:1163.08px;top:79.92px;font-size:10.72px;color:#065fd4;-webkit-text-stroke:0.5px #065fd4;transform:scaleX(1.0336)">ADVANCED MODE</div>
<div class="t" style="left:1075.90px;top:115.38px;font-size:9.71px;color:#606060;transform:scaleX(1.0385)">Jan 1 – Dec 31, 2022</div>
<div class="t" style="left:1075.34px;top:129.96px;font-size:11.74px;color:#0d0d0d;transform:scaleX(1.1206)">2022</div>
<div class="t" style="left:239.53px;top:134.55px;font-size:11.16px;color:#606060;-webkit-text-stroke:0.3px #606060;transform:scaleX(1.0553)">Overview</div>
<div class="t" style="left:322.19px;top:134.55px;font-size:11.16px;color:#606060;-webkit-text-stroke:0.3px #606060;transform:scaleX(1.0895)">Content</div>
<div class="t" style="left:398.70px;top:134.55px;font-size:11.16px;color:#606060;-webkit-text-stroke:0.3px #606060;transform:scaleX(1.0644)">Audience</div>
<div class="t" style="left:481.08px;top:134.55px;font-size:11.16px;color:#065fd4;-webkit-text-stroke:0.3px #065fd4;transform:scaleX(1.0283)">Revenue</div>
<div class="t" style="left:559.78px;top:134.55px;font-size:11.16px;color:#606060;-webkit-text-stroke:0.3px #606060;transform:scaleX(1.0316)">Research</div>
<div class="t" style="left:247.40px;top:179.22px;font-size:10.72px;color:#0d0d0d;-webkit-text-stroke:0.3px #0d0d0d;transform:scaleX(1.0665)">All</div>
<div class="t" style="left:295.30px;top:179.22px;font-size:10.72px;color:#065fd4;-webkit-text-stroke:0.3px #065fd4">Watch Page ads</div>
<div class="t" style="left:408.67px;top:179.22px;font-size:10.72px;color:#0d0d0d;-webkit-text-stroke:0.3px #0d0d0d;transform:scaleX(1.0110)">Shorts Feed ads</div>
<div class="t" style="left:522.71px;top:179.22px;font-size:10.72px;color:#0d0d0d;-webkit-text-stroke:0.3px #0d0d0d;transform:scaleX(1.0429)">Memberships</div>
<div class="t" style="left:624.97px;top:179.22px;font-size:10.72px;color:#0d0d0d;-webkit-text-stroke:0.3px #0d0d0d;transform:scaleX(1.0051)">Supers</div>
<div class="t" style="left:707.97px;top:242.25px;font-size:9.28px;color:#606060;-webkit-text-stroke:0.3px #606060;transform:scaleX(1.1172)">Estimated revenue</div>
<div class="t" style="left:697.81px;top:257.39px;font-size:21.16px;color:#0d0d0d;transform:scaleX(0.9145)">$3,142.69</div>
<div class="t" style="left:672.10px;top:289.00px;font-size:9.57px;color:#606060;font-style:italic;transform:scaleX(1.0327)">8% more than Jan 1 – Dec 31, 2021</div>
<div class="t" style="left:1200.80px;top:358.15px;font-size:9.28px;color:#606060;transform:scaleX(1.0844)">$45.00</div>
<div class="t" style="left:1200.80px;top:389.05px;font-size:9.28px;color:#606060;transform:scaleX(1.0844)">$30.00</div>
<div class="t" style="left:1200.80px;top:419.65px;font-size:9.28px;color:#606060;transform:scaleX(1.0844)">$15.00</div>
<div class="t" style="left:1200.80px;top:450.25px;font-size:9.28px;color:#606060;transform:scaleX(1.0754)">$0.00</div>
<div class="t" style="left:254.10px;top:489.95px;font-size:9.28px;color:#606060;transform:scaleX(1.0697)">Jan 1, 2022</div>
<div class="t" style="left:382.69px;top:489.95px;font-size:9.28px;color:#606060;transform:scaleX(1.0863)">Mar 3, 2022</div>
<div class="t" style="left:535.00px;top:489.95px;font-size:9.28px;color:#606060;transform:scaleX(1.0767)">May 2, 2022</div>
<div class="t" style="left:694.40px;top:489.95px;font-size:9.28px;color:#606060;transform:scaleX(1.0812)">Jul 2, 2022</div>
<div class="t" style="left:848.11px;top:489.95px;font-size:9.28px;color:#606060;transform:scaleX(1.0462)">Sep 1, 2022</div>
<div class="t" style="left:999.20px;top:489.95px;font-size:9.28px;color:#606060;transform:scaleX(1.0781)">Oct 31, 2022</div>
<div class="t" style="left:1124.20px;top:489.95px;font-size:9.28px;color:#606060;transform:scaleX(1.0776)">Dec 31, 2022</div>
<div class="t" style="left:254.29px;top:528.68px;font-size:11.01px;color:#065fd4;-webkit-text-stroke:0.5px #065fd4;transform:scaleX(0.9702)">SEE MORE</div>
<div class="t" style="left:254.50px;top:602.61px;font-size:14.64px;color:#0d0d0d;-webkit-text-stroke:0.3px #0d0d0d;transform:scaleX(1.0166)">Watch Page ads revenue</div>
<div class="t" style="left:253.63px;top:625.10px;font-size:10.87px;color:#606060">Estimated · 2022</div>
<div class="t" style="left:254.50px;top:665.71px;font-size:10.14px;color:#0d0d0d;transform:scaleX(1.0562)">Watch Page ads</div>
<div class="t" style="left:254.28px;top:699.21px;font-size:10.14px;color:#0d0d0d;transform:scaleX(1.0725)">YouTube Premium</div>
<div class="t" style="left:665.89px;top:665.61px;font-size:10.14px;color:#0d0d0d;transform:scaleX(1.0590)">$2,983.25</div>
<div class="t" style="left:673.89px;top:699.41px;font-size:10.14px;color:#0d0d0d;transform:scaleX(1.0855)">$159.45</div>
<div class="t" style="left:254.08px;top:740.58px;font-size:11.01px;color:#065fd4;-webkit-text-stroke:0.5px #065fd4;transform:scaleX(0.9806)">SEE MORE</div>
<div class="t" style="left:253.78px;top:814.31px;font-size:14.64px;color:#0d0d0d;-webkit-text-stroke:0.3px #0d0d0d;transform:scaleX(1.0432)">How much advertisers pay</div>
<div class="t" style="left:781.59px;top:602.61px;font-size:14.64px;color:#0d0d0d;-webkit-text-stroke:0.3px #0d0d0d;transform:scaleX(1.0291)">Earnings by ad type</div>
<div class="t" style="left:782.59px;top:625.10px;font-size:10.87px;color:#606060;transform:scaleX(0.9771)">YouTube ad revenue · 2022</div>
<div class="t" style="left:782.36px;top:665.71px;font-size:10.14px;color:#0d0d0d;transform:scaleX(1.0760)">Skippable video ads (Auction)</div>
<div class="t" style="left:781.92px;top:699.21px;font-size:10.14px;color:#0d0d0d;transform:scaleX(1.0812)">Non-skippable video ads (Auction)</div>
<div class="t" style="left:781.82px;top:732.71px;font-size:10.14px;color:#0d0d0d;transform:scaleX(1.0882)">Bumper ads (Auction)</div>
<div class="t" style="left:781.82px;top:766.41px;font-size:10.14px;color:#0d0d0d;transform:scaleX(1.0857)">Display ads (Auction)</div>
<div class="t" style="left:781.93px;top:800.01px;font-size:10.14px;color:#0d0d0d;transform:scaleX(1.0801)">Unknown</div>
<div class="t" style="left:1212.08px;top:665.71px;font-size:10.14px;color:#0d0d0d;transform:scaleX(1.0264)">76.4%</div>
<div class="t" style="left:1211.87px;top:699.21px;font-size:10.14px;color:#0d0d0d;transform:scaleX(1.0339)">10.9%</div>
<div class="t" style="left:1218.29px;top:732.71px;font-size:10.14px;color:#0d0d0d;transform:scaleX(1.0080)">8.1%</div>
<div class="t" style="left:1218.50px;top:766.41px;font-size:10.14px;color:#0d0d0d">4.6%</div>
<div class="t" style="left:1218.39px;top:800.01px;font-size:10.14px;color:#0d0d0d">0.1%</div>
</body></html>
